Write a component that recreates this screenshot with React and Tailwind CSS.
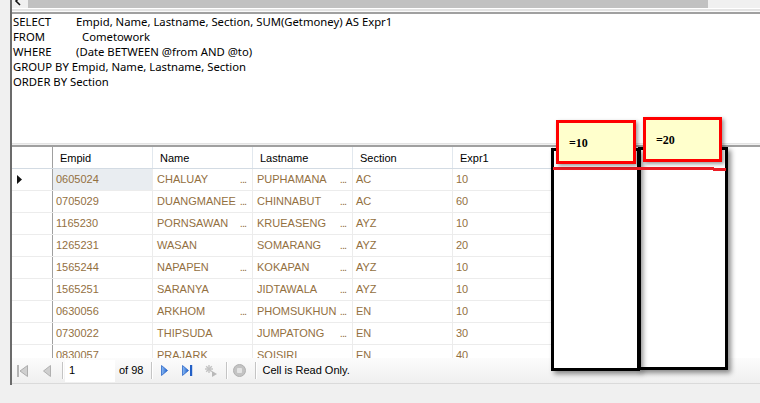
import React from "react";

const rows = [
  ["0605024", "CHALUAY", true, "PUPHAMANA", true, "AC", "10"],
  ["0705029", "DUANGMANEE", true, "CHINNABUT", true, "AC", "60"],
  ["1165230", "PORNSAWAN", true, "KRUEASENG", true, "AYZ", "10"],
  ["1265231", "WASAN", false, "SOMARANG", true, "AYZ", "20"],
  ["1565244", "NAPAPEN", true, "KOKAPAN", true, "AYZ", "10"],
  ["1565251", "SARANYA", false, "JIDTAWALA", true, "AYZ", "10"],
  ["0630056", "ARKHOM", true, "PHOMSUKHUN", true, "EN", "10"],
  ["0730022", "THIPSUDA", false, "JUMPATONG", true, "EN", "30"],
  ["0830057", "PRAJARK", false, "SOISIRI", false, "EN", "40"],
];

function TextCell({ text, ell }) {
  return (
    <div className="w-[100px] h-full border-r border-[#ececec] flex items-center pl-[4px] pr-[6px] overflow-hidden whitespace-nowrap">
      <span>{text}</span>
      {ell && <span className="ml-auto tracking-[-1px]">...</span>}
    </div>
  );
}

function Sep() {
  return (
    <div className="flex h-[17px]">
      <div className="w-px bg-[#c4c4c4]" />
      <div className="w-px bg-white" />
    </div>
  );
}

export default function App() {
  return (
    <div className="relative w-[760px] h-[403px] bg-[#f0f0f0] overflow-hidden flex flex-col font-['Liberation_Sans',Arial,sans-serif] text-black">
      <div className="flex h-[385px]">
        <div className="w-[10px] bg-[#f0f0f0]" />
        <div className="w-[2px] bg-[#6b6b6b]" />
        <div className="flex-1 flex flex-col min-w-0">
          {/* top scrollbar */}
          <div className="flex h-[8px]">
            <div className="w-[16px] bg-[#f0f0f0] relative overflow-hidden">
              <svg width="16" height="8" viewBox="0 0 16 8" className="block">
                <polyline points="8,-3 4,1 8,5" fill="none" stroke="#111" strokeWidth="1.6" />
              </svg>
            </div>
            <div className="w-[680px] bg-[#c1c1c1]" />
            <div className="flex-1 bg-[#f0f0f0]" />
          </div>
          <div className="h-px bg-white" />
          <div className="h-[2px] bg-[#e3e3e3]" />
          <div className="h-px bg-[#fafafa]" />
          <div className="h-[2px] bg-[#a0a0a0]" />
          {/* SQL pane */}
          <div className="h-[129px] bg-white pl-px font-['Noto_Sans',sans-serif] text-[11.3px] leading-[15px] whitespace-nowrap">
            <div className="flex">
              <span className="w-[63px]">SELECT</span>
              <span>Empid, Name, Lastname, Section, SUM(Getmoney) AS Expr1</span>
            </div>
            <div className="flex">
              <span className="w-[69px]">FROM</span>
              <span>Cometowork</span>
            </div>
            <div className="flex">
              <span className="w-[63px]">WHERE</span>
              <span>(Date BETWEEN @from AND @to)</span>
            </div>
            <div>GROUP BY Empid, Name, Lastname, Section</div>
            <div>ORDER BY Section</div>
          </div>
          <div className="h-px bg-[#e3e3e3]" />
          <div className="h-px bg-[#f0f0f0]" />
          <div className="h-[2px] bg-[#a0a0a0]" />
          {/* grid */}
          <div className="h-[211px] bg-white overflow-hidden text-[11px]">
            <div className="flex h-[22px]">
              <div className="flex h-full border-b border-[#d3dbe3]">
                <div className="w-[41px] h-full border-r border-[#a0a0a0]" />
                {["Empid", "Name", "Lastname", "Section", "Expr1"].map((h) => (
                  <div key={h} className="w-[100px] h-full border-r border-[#e2e8ee] pl-[7px] pt-[1px] flex items-center">
                    {h}
                  </div>
                ))}
              </div>
            </div>
            {rows.map((r, i) => (
              <div key={r[0]} className="flex h-[22px]">
                <div className="flex h-full border-b border-[#ececec] text-[#93703f]">
                  <div className="w-[41px] h-full border-r border-[#a0a0a0] flex items-center pl-[5px]">
                    {i === 0 && (
                      <svg width="6" height="9" viewBox="0 0 6 9">
                        <polygon points="0,0 5,4.5 0,9" fill="#111" />
                      </svg>
                    )}
                  </div>
                  <div
                    className={
                      "w-[100px] h-full border-r border-[#ececec] flex items-center pl-[3px] " +
                      (i === 0 ? "bg-[#e9edf1]" : "")
                    }
                  >
                    {r[0]}
                  </div>
                  <TextCell text={r[1]} ell={r[2]} />
                  <TextCell text={r[3]} ell={r[4]} />
                  <div className="w-[100px] h-full border-r border-[#ececec] flex items-center pl-[3px]">{r[5]}</div>
                  <div className="w-[100px] h-full border-r border-[#ececec] flex items-center pl-[3px]">{r[6]}</div>
                </div>
              </div>
            ))}
          </div>
          {/* toolbar */}
          <div className="h-[25px] bg-linear-to-b from-[#fcfcfc] to-[#efefef] flex items-center text-[11px] whitespace-nowrap">
            <svg width="11" height="12" viewBox="0 0 11 12" className="ml-[5px]">
              <rect x="0" y="0" width="2" height="12" fill="#b4b4b4" />
              <polygon points="10.5,0.5 3,6 10.5,11.5" fill="#cfcfcf" stroke="#adadad" />
            </svg>
            <svg width="8" height="12" viewBox="0 0 8 12" className="ml-[15px]">
              <polygon points="7.5,0.5 0.5,6 7.5,11.5" fill="#cfcfcf" stroke="#b0b0b0" />
            </svg>
            <div className="ml-[11px]">
              <Sep />
            </div>
            <div className="ml-px w-[50px] h-[22px] bg-white flex items-center pl-[4px]">1</div>
            <span className="ml-[4px]">of 98</span>
            <div className="ml-[8px]">
              <Sep />
            </div>
            <svg width="7" height="11" viewBox="0 0 7 11" className="ml-[8px]">
              <defs>
                <linearGradient id="bl" x1="0" y1="0" x2="1" y2="0">
                  <stop offset="0" stopColor="#8fbdf3" />
                  <stop offset="1" stopColor="#1b5fcf" />
                </linearGradient>
              </defs>
              <polygon points="0.5,0.5 6.5,5.5 0.5,10.5" fill="url(#bl)" stroke="#2a66c8" strokeWidth="0.8" />
            </svg>
            <svg width="11" height="11" viewBox="0 0 11 11" className="ml-[14px]">
              <polygon points="0.5,0.5 6.5,5.5 0.5,10.5" fill="url(#bl)" stroke="#2a66c8" strokeWidth="0.8" />
              <rect x="8" y="0" width="2.2" height="11" fill="#2360c6" />
            </svg>
            <svg width="12" height="12" viewBox="0 0 12 12" className="ml-[12px]">
              <g stroke="#c2c2c2" strokeWidth="1.4">
                <line x1="4" y1="0" x2="4" y2="8" />
                <line x1="0" y1="4" x2="8" y2="4" />
                <line x1="1.2" y1="1.2" x2="6.8" y2="6.8" />
                <line x1="6.8" y1="1.2" x2="1.2" y2="6.8" />
              </g>
              <polygon points="7,6 12,9 7,12" fill="#b9b9b9" />
            </svg>
            <div className="ml-[9px]">
              <Sep />
            </div>
            <svg width="13" height="13" viewBox="0 0 13 13" className="ml-[5px]">
              <circle cx="6.5" cy="6.5" r="6" fill="#c3c3c3" stroke="#b0b0b0" />
              <rect x="4" y="4" width="5" height="5" rx="0.8" fill="#e4e4e4" />
            </svg>
            <div className="ml-[9px]">
              <Sep />
            </div>
            <span className="ml-[5px]">Cell is Read Only.</span>
          </div>
          <div className="h-px bg-[#dadada]" />
          <div className="h-px bg-[#f0f0f0]" />
        </div>
      </div>
      <div className="flex-1 bg-[#f0f0f0]" />

      {/* overlays */}
      <div className="absolute left-[638px] top-[147px] w-[90px] h-[223px] border-[3px] border-black bg-white shadow-[3px_3px_5px_rgba(0,0,0,0.45)]" />
      <div className="absolute left-[551px] top-[148px] w-[89px] h-[223px] border-[3px] border-black bg-white shadow-[3px_3px_5px_rgba(0,0,0,0.45)]" />
      <div className="absolute left-[553px] top-[167px] w-[161px] h-[3px] bg-[#ec1c24]" />
      <div className="absolute left-[713px] top-[168px] w-[13px] h-[3px] bg-[#ec1c24]" />
      <div className="absolute left-[556px] top-[120px] w-[80px] h-[44px] border-[3px] border-[#ff0000] bg-[#ffffcc] shadow-[2px_2px_4px_rgba(0,0,0,0.4)] flex items-center pl-[10px] pt-[2px] font-['Liberation_Serif',serif] font-bold text-[12px]">
        =10
      </div>
      <div className="absolute left-[643px] top-[117px] w-[79px] h-[45px] border-[3px] border-[#ff0000] bg-[#ffffcc] shadow-[2px_2px_4px_rgba(0,0,0,0.4)] flex items-center pl-[10px] font-['Liberation_Serif',serif] font-bold text-[12px]">
        =20
      </div>
    </div>
  );
}
